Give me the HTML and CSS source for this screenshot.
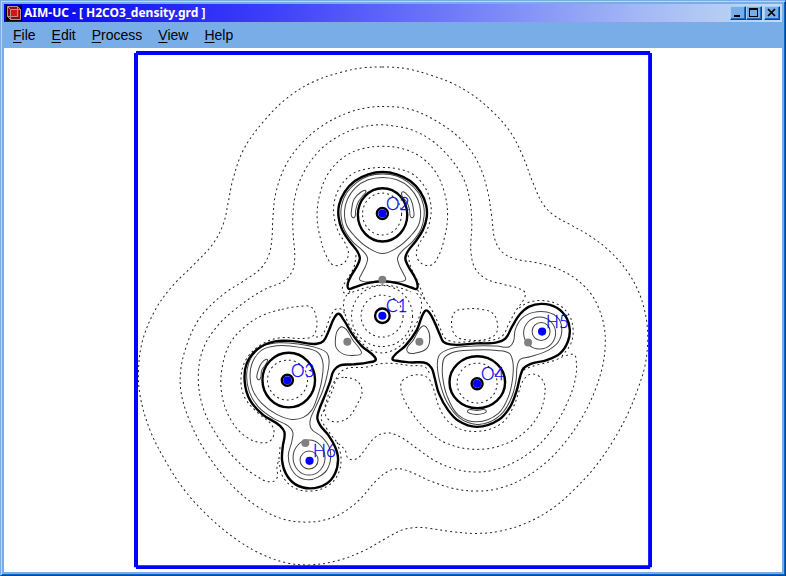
FILE: index.html
```html
<!DOCTYPE html>
<html lang="en">
<head>
<meta charset="utf-8">
<title>AIM-UC - [ H2CO3_density.grd ]</title>
<link rel="stylesheet" href="styles.css">
</head>
<body>
<div class="window">
  <header class="titlebar">
    <svg class="app-icon" viewBox="0 0 16 16" aria-hidden="true">
      <rect width="16" height="16" fill="#000"/>
      <path d="M1.500 1.500H11.500L14.500 4.500V14.500H4.500L1.500 11.500Z" fill="#8c0f0f"/>
      <rect x="5" y="4" width="8" height="8" fill="#d01818"/>
      <path d="M1.500 1.500H11.500V11.500H1.500ZM4.500 4.500H14.500V14.500H4.500ZM1.500 1.500L4.500 4.500M11.500 1.500L14.500 4.500M1.500 11.500L4.500 14.500" fill="none" stroke="#b89090"/>
    </svg>
    <h1 class="title">AIM-UC - [ H2CO3_density.grd ]</h1>
    <div class="controls">
      <button class="control" aria-label="Minimize"><svg viewBox="0 0 14 12"><path d="M3 8H9V10H3Z"/></svg></button>
      <button class="control" aria-label="Maximize"><svg viewBox="0 0 14 12"><path fill-rule="evenodd" d="M2 1H11V10H2ZM3 3V9H10V3Z"/></svg></button>
      <button class="control control-close" aria-label="Close"><svg viewBox="0 0 14 12"><path d="M3 2L10 9M10 2L3 9" fill="none" stroke="#000" stroke-width="1.700"/></svg></button>
    </div>
  </header>
  <nav class="menubar">
    <button class="menu"><u>F</u>ile</button>
    <button class="menu"><u>E</u>dit</button>
    <button class="menu"><u>P</u>rocess</button>
    <button class="menu"><u>V</u>iew</button>
    <button class="menu"><u>H</u>elp</button>
  </nav>
  <main class="view">
    <svg class="plot" viewBox="134 51 518 518" role="img" aria-label="Electron density contours of H2CO3">
      <path class="frame" d="M136 53H650M136 567H650M136 53V567M650 53V567"/>
      <g id="contours"></g>
      <g class="dotted">
        <ellipse cx="382" cy="214" rx="19.500" ry="21"/>
        <circle cx="287.500" cy="380" r="20"/>
        <circle cx="477" cy="383" r="20"/>
        <circle cx="382" cy="316" r="21"/>
        <circle cx="382" cy="316" r="30.500"/>
      </g>
      <g class="thin">
        <circle cx="309" cy="460" r="9"/>
        <ellipse cx="309" cy="457.500" rx="16" ry="17.500"/>
        <circle cx="541" cy="331.500" r="9"/>
        <circle cx="539.500" cy="333" r="16"/>
      </g>
      <g class="thick">
        <ellipse cx="382.500" cy="214.800" rx="24.700" ry="26.600"/>
        <ellipse cx="288.700" cy="380" rx="26.300" ry="27.300"/>
        <ellipse cx="477.200" cy="382.200" rx="27.800" ry="26"/>
        <circle cx="382.300" cy="213.500" r="5.500"/>
        <circle cx="287.300" cy="380.200" r="5.500"/>
        <circle cx="477" cy="383.700" r="5.500"/>
        <circle cx="382.300" cy="315.700" r="7.300"/>
      </g>
      <g class="critical">
        <circle cx="382.300" cy="279.700" r="4"/>
        <circle cx="347.300" cy="341.700" r="4"/>
        <circle cx="419.300" cy="341.700" r="4"/>
        <circle cx="305.300" cy="443" r="4"/>
        <circle cx="528" cy="342.500" r="4"/>
      </g>
      <g class="atom">
        <circle cx="382.300" cy="213.500" r="4.100"/>
        <circle cx="382.300" cy="315.700" r="4.100"/>
        <circle cx="287.300" cy="380.200" r="4.100"/>
        <circle cx="477" cy="383.700" r="4.100"/>
        <circle cx="309.500" cy="460.700" r="4.100"/>
        <circle cx="542" cy="331.500" r="4.100"/>
      </g>
      <g class="label">
        <text x="386" y="210">O2</text>
        <text x="386" y="312">C1</text>
        <text x="291" y="377">O3</text>
        <text x="481" y="380">O4</text>
        <text x="546" y="328">H5</text>
        <text x="313" y="457">H6</text>
      </g>
    </svg>
  </main>
</div>
<script src="contours.js"></script>
</body>
</html>
```
FILE: styles.css
```css
* { box-sizing: border-box; }
body {
  margin: 0;
  background: #79ade8;
  font-family: "Liberation Sans", Arial, sans-serif;
  color: #000;
}
.window {
  display: flex;
  flex-direction: column;
  min-height: 100vh;
  padding: 3px;
  border: 1px solid;
  border-color: #79ade8 #303a48 #303a48 #79ade8;
  box-shadow: inset 1px 1px #b5d8f8, inset -1px -1px #0c62cc;
}
.titlebar {
  display: flex;
  align-items: center;
  height: 18px;
  padding: 0 2px;
  background: linear-gradient(90deg, #0000ee, #3c3cfa 33%, #a5b8f5 82%, #c2dcf2);
}
.app-icon { width: 16px; height: 16px; flex: none; }
.title {
  flex: 1;
  margin: 0;
  padding-left: 2px;
  font: bold 12px/18px "Noto Sans", "DejaVu Sans Condensed", sans-serif;
  color: #fff;
  white-space: nowrap;
}
.controls { display: flex; }
.control {
  width: 16px;
  height: 14px;
  padding: 0;
  border: solid;
  border-width: 1px;
  border-color: #a8cff5 #303a48 #303a48 #a8cff5;
  background: #79ade8;
  box-shadow: inset -1px -1px #1c6cd0;
}
.control-close { margin-left: 2px; }
.control svg { display: block; width: 14px; height: 12px; }
.menubar {
  display: flex;
  height: 26px;
  align-items: center;
  padding-left: 1px;
}
.menu {
  padding: 0 8px;
  border: 0;
  background: none;
  font: 14px/24px "Liberation Sans", Arial, sans-serif;
  color: #000;
}
.menu u { text-underline-offset: 2px; }
.view {
  flex: 1;
  padding: 3px 0;
  background: #fff;
}
.plot {
  display: block;
  width: 66.600%;
  margin: 0 auto;
}
.plot path, .plot ellipse, .plot circle { fill: none; }
.plot .frame { stroke: #00f; stroke-width: 4; }
.plot .dotted { stroke: #222; stroke-width: 1; stroke-dasharray: 2 3; }
.plot .thin { stroke: #444; stroke-width: 1; }
.plot .thick { stroke: #000; stroke-width: 2.400; }
.plot .critical circle { fill: #808080; }
.plot .atom circle { fill: #00f; }
.plot .label text {
  fill: #00f;
  stroke: #00f;
  stroke-width: 0.300;
  font: 300 17px Lato, sans-serif;
}
```
FILE: contours.js
```js
// Each contour: line style, whether it closes, and its x,y vertices.
const contours = [
  ["dotted", true, "382,67 390,67 410,69.3 430,75 450,82.3 470,93.3 490,109.3 510,131.7 523,156.7 533,183 543.5,205 553.5,215 570,224.5 590,236 610,251.5 626.7,270.7 638.5,291.7 644,308.5 647,325 647.5,343 645,365 638.5,386.7 627.7,413.5 613.5,440 593.5,468.5 575,488.5 553.5,507.5 526.7,522.7 500,531 476.7,533.3 450,531.3 430,528.3 415,527.3 401.7,530 388.5,536.7 363.5,550.7 336.7,560.7 310,564.7 286.7,562.7 260,553.3 235,538.3 210,517.7 185,490.7 165,460 150,430 140,395 138.5,370 142.7,340 156,308.5 171.7,286.7 193.3,265 213.3,243.3 223.5,223.3 228.3,201.7 232.3,181.7 243.3,150 263.3,121.7 286.7,98.3 313.3,81.7 343.3,71.7 363.3,67.7"],
  ["dotted", true, "382,106.5 410,109.3 440,123.3 463.3,141.7 478.3,163.3 487.3,190 491.7,216.7 495,240 501.7,251.7 513.3,258.3 536.7,262.7 556.7,268.3 575,278.3 590,292.7 598.7,308.3 604.3,328.3 605,346.7 602.7,365 595,390 583.3,415 566.7,440 546.7,461.7 523.3,478.3 500,488 476.7,491 453.3,488.3 430,480.7 410,471.7 398,468.5 388.5,471 376.7,480 360,499 343.3,512.3 326.7,519.3 306.7,522 283.3,519 256.7,506 230,483.3 206.7,453.3 190,421.7 181,391.7 180.7,370 186.7,345 196.7,322.7 206.7,309.3 226.7,291.7 245,280 261.7,267.3 269.3,253.3 272,236.7 272.7,220 275.7,193.3 285,166.7 300,145 323.3,125 350,112 366.7,107.7"],
  ["dotted", false, "280,447 279,458 277,466.7 276.7,478.3 271.7,481.7 253.3,474 233.3,456.7 216.7,435 203.3,408.3 198.3,378.3 202.7,350 216.7,326.7 236,308.5 263.3,290 285,280 292.7,270 294.7,256.7 293.3,236.7 292.7,220 295.7,193.3 305,170 320,150 336.7,137.3 356.7,128.3 382,124.7 391.7,125.7 410,129.3 430,139.3 448.3,156 463.3,178.3 470,201.7 471.7,223.3 471,253.3 475,268.3 485,278.3 503.3,284.3 518.3,288.3 525,292.7 523.3,300 517.3,308.3 509,323 503,335 495,339.5 476,341 450,341 445,338 440,328 433,312 425,300 416,288"],
  ["dotted", false, "519,308 528,302.5 542,300.5 559,305 570,317 573,330 571,343 562,356"],
  ["dotted", false, "523.3,370 530,367 536.7,365 553.3,360.7 566.7,355.3 574,354.7 576.3,363.3 575,380 568.3,400 555,425 536.7,446.7 515,461.7 493.3,470 476.7,472 456.7,469.3 436.7,461.7 416.7,448.3 400,436.7 386.7,432.7 375,437.3 363.3,451.7 356.7,458.7 348.3,458.3 345,450 337,442 327,429 321,418 325,408 333,389 338,375 345,369 366,367 382,363.5 395,363.5 410,365.5 425,367 430,374"],
  ["dotted", false, "337,442 341,458 338,474 329,485 310,491 293,487 282,475 279,461"],
  ["dotted", true, "382.3,146.3 404.6,149.3 421.3,157.3 436.3,173.3 444.6,193.3 447.5,216.7 444.6,236.7 438,256.7 431.3,265 421.3,263.3 416.3,255 418.6,245 426.3,231.7 430.6,216.7 430.6,203 424.6,186.7 411.3,173.3 394.6,168.3 382.3,167.5 370,168.3 353.3,173.3 340,186.7 334,203 334,216.7 338.3,231.7 346,245 348.3,255 343.3,263.3 333.3,265 326.7,256.7 320,236.7 317,216.7 320,193.3 328.3,173.3 343.3,157.3 360,149.3"],
  ["dotted", false, "356,255 354,266.7 346.7,280 342.3,288.3 345,293.3 353.3,291.7 368,287 382,285 397,287 411,291.7"],
  ["dotted", false, "408,255 410.6,266.7 417,280 425,300"],
  ["dotted", false, "350,291 344,300 345,314 352,330 364,345 376,352 388,352 401,345 412,331 420,314 421,300 415,291"],
  ["dotted", false, "316,337 321,336 326,328 331,315 336,309 341,309 346,316"],
  ["dotted", true, "281.7,309.3 296.7,306.7 311.7,307.3 316,316.7 316.7,326.7 312.7,336 303.3,338.3 280,337.7 263.3,343.3 246.7,358.3 241,376.7 244.3,396.7 258.3,413.3 271.7,425 274,433.3 270,441 261.7,442.7 245,436 230,418.3 221.7,393.3 221.7,370 230,343.3 246.7,325 263.3,315"],
  ["dotted", true, "545,390 544,383.3 538.3,375.7 530,374.3 523.3,380 519.3,390 513.3,406.7 503.3,421.7 490,429 476,431.3 460,429 446.7,420 438.3,405 432.7,386.7 428.3,378.3 421.7,375 410,376 401.7,381.7 401,390 410,410 426.7,430 446.7,443.3 476.7,449.3 506.7,443.3 526.7,430 540,411.7"],
  ["dotted", true, "455,311.7 451.7,326.7 456.7,336.7 470,340 486.7,339 496,333.3 497.3,323.3 492.7,313.3 480,309 465,309"],
  ["dotted", true, "345,377.3 356.7,380.7 362,390 356.7,405 348.3,417.3 338.3,421.7 328.3,419.3 324.7,411.7 326.7,400 331.7,386.7 336.7,379"],
  ["thin", true, "382.5,174 396.5,176 408.5,182.5 418.5,193 423.5,205.5 424,216 421,229 412.5,241.5 402.5,250.5 397.5,258 399.5,266 403.5,274 405.5,279.5 402.5,281.3 382.5,280.5 362.5,281.3 359.5,279.5 361.5,274 365.5,266 367.5,258 362.5,250.5 352.5,241.5 344,229 341,216 341.5,205.5 346.5,193 356.5,182.5 368.5,176"],
  ["thin", true, "382.5,177.5 397.5,180 409.5,187.5 417.5,199 420.5,211 418.5,225 410.5,236 396.5,248 382.5,253.5 368.5,248 354.5,236 346.5,225 344.5,211 347.5,199 355.5,187.5 367.5,180"],
  ["thin", true, "365.7,190.7 360,192.7 354,199.3 351.7,208.3 352.3,217.3 354.3,217.3 355.7,210 358.3,201.7 362.7,196"],
  ["thin", true, "402,192 406,193.5 411,200 413.3,209 413,217.3 411,217.3 409.5,210 407,202.5 402,196"],
  ["thin", true, "246.7,373.3 251.7,356.7 263.3,346 278.3,342.7 298.3,344 318.3,348.3 326.7,352.7 329,360 326.7,376.7 322.3,391.7 315.5,407 310,421 311,428.3 321.7,436.7 329,446.7 330.7,456.7 326.7,470 318,477 309,479.7 298,476.5 290.5,467 288.3,455 291.7,441.7 292.7,431.7 288.3,426 273.3,418.3 258.3,406.7 249.3,391.7"],
  ["thin", true, "250,376.7 252.7,361.7 261.7,350 276.7,345.7 300,347.3 318.3,352.7 322.7,361.7 321.7,380 317.3,396.7 311.7,410 303.3,417.3 291.7,419.3 276.7,414.3 261.7,403.3 252.7,390"],
  ["thin", true, "267.3,359.3 263.3,361 258.3,370 257.7,379.3 259.7,379.3 261.7,370 266.7,362.7"],
  ["thin", true, "341.7,326.7 346.7,330 352.7,340 360,349.3 361.3,353.3 353.3,355.3 343.3,354 336,347.3 335.3,340 337.3,330.7"],
  ["thin", true, "424,325.7 427.7,329.3 429.7,340 426.7,348.3 416.7,352.7 408.3,352.7 406.7,349.3 413.3,340 420,328.3"],
  ["thin", true, "437.3,363.3 439.3,355 448.3,349.3 473.3,346 496.7,346 509.3,346.7 513.3,341.7 515,330 521.7,318.3 533.3,312.3 546.7,312 558.3,318.3 561.7,330 558.3,341.7 548.3,350 530,356.7 520,359.3 517.3,365 516,380 511.7,396.7 503.3,411.7 490,421.7 476.7,424.3 460,418.3 446.7,401.7 439.3,380"],
  ["thin", true, "442.3,366.7 444,358.3 451.7,352.7 473.3,350 496.7,350.3 509.3,353.3 512.7,361.7 512.7,376.7 508.3,396.7 498.3,413.3 476.7,421.7 458.3,415 446.7,395 442.7,378"],
  ["thin", true, "467.3,411 476.7,410.3 486.3,411 483.3,413.3 476.7,414.3 470,413.3"],
  ["thick", true, "382.5,172 396.8,174.3 410.2,181 420.2,191.7 426,205 426.7,216.7 422.8,230 415.2,241.7 407.5,251.7 405.2,258.3 407.5,265 413.5,275 417.2,283.3 416.7,288.7 411.8,287.7 398.5,283.3 382.5,281.3 366.5,283.3 353.2,287.7 348.5,288.7 347.8,283.3 351.5,275 357.5,265 359.8,258.3 357.5,251.7 349.8,241.7 342.2,230 338.5,216.7 339,205 344.8,191.7 354.8,181 368.2,174.3"],
  ["thick", true, "338.3,313.7 343.3,319.3 351.7,333.3 361.7,346 374,356.2 375.7,359.6 368.3,362.3 353.3,364.3 340,365.3 334,370 330,381.7 325,395 319,410 317.3,418.3 320,425 328.3,435 335,446.7 338,458.3 335,473.3 326.7,483.3 310,488.3 295,484 285.7,473.3 282,460 282.7,446.7 284.3,431.7 280,425.7 263.3,415 250,400 244.7,381.7 246.7,363.3 258.3,348.3 275,341.3 293.3,341 316.7,343.7 323.3,341 328.3,331.7 334,318.3"],
  ["thick", true, "426,310.3 429.3,312.7 435,323.3 440,335 443.3,341.7 450,344.3 476.7,343.3 496.7,342.3 505,338.8 511.7,327 520,314 529,306.5 541.7,303.8 556.7,307.7 566.7,318.3 569.7,330 567.7,341.7 560,353.3 546.7,360 530,364 523.3,368.3 520,376.7 516.7,390 510,406.7 498.3,420 476.7,426.8 458.3,420.7 448,410 438.8,393.3 434.3,376.7 431.7,368.3 426.7,363.3 410,362.3 396.7,360.7 392.5,359.3 393.8,356 405,346 416.7,330 423.3,313.3"]
];

// Smooth curve through the vertices, written as cubic segments.
function spline(points, closed) {
  const n = points.length;
  const at = i => closed ? points[(i + n) % n] : points[Math.max(0, Math.min(n - 1, i))];
  const length = (p, q) => Math.hypot(q[0] - p[0], q[1] - p[1]) || 1;
  // Unit tangent at vertex i: the bisector of its two segments.
  const tangent = i => {
    const [a, b, c] = [at(i - 1), at(i), at(i + 1)];
    const before = length(a, b), after = length(b, c);
    const x = (b[0] - a[0]) / before + (c[0] - b[0]) / after;
    const y = (b[1] - a[1]) / before + (c[1] - b[1]) / after;
    const size = Math.hypot(x, y) || 1;
    return [x / size, y / size];
  };
  let d = `M${points[0]}`;
  for (let i = 0; i < (closed ? n : n - 1); i++) {
    const b = at(i), c = at(i + 1);
    const reach = length(b, c) * 0.35;
    const t1 = tangent(i), t2 = tangent(i + 1);
    d += `C${b[0] + t1[0] * reach},${b[1] + t1[1] * reach} ${c[0] - t2[0] * reach},${c[1] - t2[1] * reach} ${c}`;
  }
  return closed ? d + "Z" : d;
}

const layer = document.getElementById("contours");
for (const [style, closed, data] of contours) {
  const path = document.createElementNS("http://www.w3.org/2000/svg", "path");
  path.setAttribute("class", style);
  path.setAttribute("d", spline(data.split(" ").map(p => p.split(",").map(Number)), closed));
  layer.append(path);
}
```
